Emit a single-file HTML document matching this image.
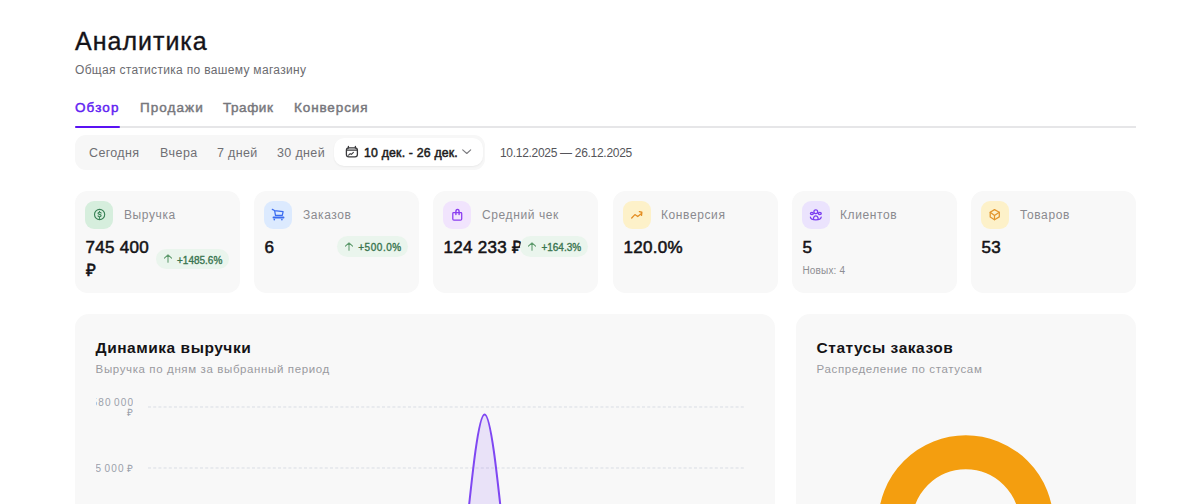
<!DOCTYPE html>
<html><head><meta charset="utf-8">
<style>
*{margin:0;padding:0;box-sizing:border-box}
html,body{width:1200px;height:504px;overflow:hidden;background:#fff;font-family:"Liberation Sans",sans-serif;color:#111}
.abs{position:absolute;white-space:nowrap}
#title{left:75px;top:26px;font-size:25px;line-height:30px;letter-spacing:1px;color:#151318;-webkit-text-stroke:0.35px #151318}
#sub{left:75px;top:62.5px;font-size:12px;line-height:14px;letter-spacing:0.32px;color:#6b6b70}
.tab{position:absolute;top:99.5px;font-size:13.5px;line-height:16px;color:#77777c;-webkit-text-stroke:0.45px currentColor;white-space:nowrap;letter-spacing:0.4px}
#tabline{position:absolute;left:75px;top:126px;width:1061px;height:2px;background:#e6e6e8}
#tabact{position:absolute;left:75px;top:125.6px;width:45px;height:2.4px;background:#5a12f3;border-radius:2px}
#bar{position:absolute;left:75px;top:135px;width:410px;height:35px;background:#f7f7f7;border-radius:11px}
.rb{position:absolute;top:146px;font-size:12.5px;line-height:14px;color:#6f6f74;white-space:nowrap;letter-spacing:0.35px}
#pill{position:absolute;left:334px;top:138px;width:149px;height:28px;background:#fff;border-radius:10px;box-shadow:0 1px 2px rgba(0,0,0,.06)}
#range{left:500px;top:146px;font-size:12px;line-height:14px;letter-spacing:-0.3px;color:#55555a}
.card{position:absolute;top:190.5px;width:165px;height:102.5px;background:#f8f8f8;border-radius:12.5px}
.ib{position:absolute;left:10px;top:10.5px;width:28px;height:28px;border-radius:9px}
.ib svg{position:absolute;left:0;top:0;width:28px;height:28px;fill:none;stroke-width:1.25;stroke-linecap:round;stroke-linejoin:round}
.lbl{position:absolute;left:49px;top:17.5px;font-size:12px;line-height:14px;color:#8a8a8f;white-space:nowrap;letter-spacing:0.6px}
.val{position:absolute;left:10.5px;top:45px;font-size:17px;line-height:23.7px;color:#141316;-webkit-text-stroke:0.55px currentColor;letter-spacing:0.3px}
.badge{position:absolute;height:20.7px;border-radius:11px;background:#eaf5ed;color:#3a7550;font-size:10px;line-height:20.7px;-webkit-text-stroke:0.35px currentColor;white-space:nowrap}
.badge svg{position:absolute;left:7.5px;top:5.8px;width:8px;height:9px}
.badge span{position:absolute;left:21px;top:2px}
.note{position:absolute;left:10.5px;top:74px;font-size:10px;color:#8e8e93;white-space:nowrap;letter-spacing:0.15px}
.big{position:absolute;top:314px;height:220px;background:#f8f8f8;border-radius:14px;overflow:hidden}
.bt{position:absolute;left:20.6px;top:23.5px;font-size:15.5px;line-height:20px;font-weight:bold;color:#141316;white-space:nowrap;letter-spacing:0.53px}
.bs{position:absolute;left:20.6px;top:48px;font-size:11.5px;line-height:14px;color:#9a9a9f;white-space:nowrap;letter-spacing:0.62px}
.yl{position:absolute;font-size:10px;line-height:10.5px;color:#9ba1ab;text-align:right;white-space:nowrap;letter-spacing:1.15px;word-spacing:-1.65px;margin-right:-1.15px}
</style></head><body>
<div class="abs" id="title">Аналитика</div>
<div class="abs" id="sub">Общая статистика по вашему магазину</div>

<div class="tab" style="left:75px;color:#5f22f2;letter-spacing:1.1px">Обзор</div>
<div class="tab" style="left:140px;letter-spacing:1.05px">Продажи</div>
<div class="tab" style="left:223px;letter-spacing:0.55px">Трафик</div>
<div class="tab" style="left:294px;letter-spacing:0.88px">Конверсия</div>
<div id="tabline"></div>
<div id="tabact"></div>

<div id="bar"></div>
<div class="rb" style="left:89px">Сегодня</div>
<div class="rb" style="left:160px;letter-spacing:0.5px">Вчера</div>
<div class="rb" style="left:217px">7 дней</div>
<div class="rb" style="left:277px">30 дней</div>
<div id="pill"></div>
<svg class="abs" style="left:340px;top:142px" width="24" height="20" viewBox="340 142 24 20" fill="none" stroke="#3a3a3d" stroke-width="1.3" stroke-linecap="round" stroke-linejoin="round">
  <rect x="346.4" y="147.9" width="11" height="9" rx="2.4"/><path d="M348.4 146.5v1.4M355.4 146.5v1.4M346.6 150.2h10.6"/><path d="M348.6 155.2l1.6-1.6 1.2.8 2-2" stroke-width="1.1"/>
</svg>
<div class="abs" style="left:364px;top:146px;font-size:12.3px;line-height:14px;-webkit-text-stroke:0.5px currentColor;color:#1d1c20;letter-spacing:0.19px">10 дек. - 26 дек.</div>
<svg class="abs" style="left:460px;top:146px" width="14" height="10" viewBox="460 146 14 10" fill="none" stroke="#7a7a7e" stroke-width="1.1" stroke-linecap="round" stroke-linejoin="round"><path d="M462.7 149.8l4.1 3.7 3.9-3.7"/></svg>
<div class="abs" id="range">10.12.2025 — 26.12.2025</div>

<div class="card" style="left:75px">
  <div class="ib" style="background:#d6eedd"><svg viewBox="0 0 28 28" style="stroke:#3a8257;stroke-width:1.15"><circle cx="14.6" cy="13.5" r="5.1"/><path d="M16.1 12.1c-.3-.6-.9-.9-1.6-.9-.8 0-1.5.4-1.5 1.1 0 1.4 3.1.8 3.1 2.3 0 .7-.7 1.1-1.5 1.1-.7 0-1.3-.3-1.6-.8M14.5 10.4v.8M14.5 16.5v.8"/></svg></div>
  <div class="lbl">Выручка</div>
  <div class="val">745 400<br>₽</div>
  <div class="badge" style="left:81px;top:58px;width:73.3px"><svg viewBox="0 0 8 9"><path d="M4 8.3V.8M.4 4.1L4 .8l3.6 3.3" fill="none" stroke="#5d9a6c" stroke-width="1.05" stroke-linecap="round" stroke-linejoin="round"/></svg><span>+1485.6%</span></div>
</div>
<div class="card" style="left:254px">
  <div class="ib" style="background:#dceafe"><svg viewBox="0 0 28 28" style="stroke:#3b6cf0"><path d="M8.3 8.4l2.2 1.1M10.6 9.6l8.5 1-.8 3.7h-6.8z"/><path d="M9.5 16.5h10" stroke-width="1.9"/><path d="M10.3 18.5v.2M17.9 18.5v.2" stroke-width="1.6"/></svg></div>
  <div class="lbl">Заказов</div>
  <div class="val">6</div>
  <div class="badge" style="left:83.2px;top:45.5px;width:70.7px"><svg viewBox="0 0 8 9"><path d="M4 8.3V.8M.4 4.1L4 .8l3.6 3.3" fill="none" stroke="#5d9a6c" stroke-width="1.05" stroke-linecap="round" stroke-linejoin="round"/></svg><span style="letter-spacing:0.55px">+500.0%</span></div>
</div>
<div class="card" style="left:433px">
  <div class="ib" style="background:#f1e4fd"><svg viewBox="0 0 28 28" style="stroke:#8a3cf0"><path d="M10.5 11.7h7.5c.4 0 .7.3.7.7v5.5c0 .7-.5 1.2-1.2 1.2H11c-.7 0-1.2-.5-1.2-1.2v-5.5c0-.4.3-.7.7-.7z"/><path d="M12.9 13.5v-2.8c0-1.3.7-2.3 1.6-2.3s1.6 1 1.6 2.3v2.8" stroke-width="1.4"/></svg></div>
  <div class="lbl">Средний чек</div>
  <div class="val">124 233 ₽</div>
  <div class="badge" style="left:87.4px;top:45.5px;width:67.3px"><svg viewBox="0 0 8 9"><path d="M4 8.3V.8M.4 4.1L4 .8l3.6 3.3" fill="none" stroke="#5d9a6c" stroke-width="1.05" stroke-linecap="round" stroke-linejoin="round"/></svg><span>+164.3%</span></div>
</div>
<div class="card" style="left:613px">
  <div class="ib" style="background:#fdf1c9"><svg viewBox="0 0 28 28" style="stroke:#e38c22"><path d="M8.7 17l3.2-3.4 2.8 1.9 3.8-3.1"/><path d="M16.4 10.6l2.4.6-.3 3.2" stroke-width="1.4"/></svg></div>
  <div class="lbl" style="left:48px">Конверсия</div>
  <div class="val">120.0%</div>
</div>
<div class="card" style="left:792px">
  <div class="ib" style="background:#ebe3fd"><svg viewBox="0 0 28 28" style="stroke:#7b3cf0"><circle cx="13.8" cy="10.8" r="1.9"/><ellipse cx="9.9" cy="12.4" rx="1.5" ry="1.1"/><ellipse cx="17.8" cy="12.4" rx="1.5" ry="1.1"/><path d="M11.4 17.9Q11.7 14.9 13.8 14.9T16.2 17.9"/><path d="M8.4 16.2Q8.9 18.9 13.8 18.9T19.2 16.2"/></svg></div>
  <div class="lbl" style="left:48px">Клиентов</div>
  <div class="val">5</div>
  <div class="note">Новых: 4</div>
</div>
<div class="card" style="left:971px">
  <div class="ib" style="background:#fdf1c9"><svg viewBox="0 0 28 28" style="stroke:#e2952c"><path d="M13.5 8.6l4.8 2.7v4.6l-4.8 2.8-4.3-2.8v-4.6z"/><path d="M9.2 11.3l4.3 3.2 4.8-3.2M13.5 14.5v4.2"/></svg></div>
  <div class="lbl">Товаров</div>
  <div class="val">53</div>
</div>

<div class="big" style="left:75px;width:700px">
  <div class="bt">Динамика выручки</div>
  <div class="bs">Выручка по дням за выбранный период</div>
  <div style="position:absolute;left:21px;top:80px;width:37px;height:130px;overflow:hidden">
    <div class="yl" style="right:0;top:3.5px">580 000<br>₽</div>
    <div class="yl" style="right:0;top:70px">435 000 ₽</div>
  </div>
</div>
<div class="big" style="left:796px;width:340px">
  <div class="bt">Статусы заказов</div>
  <div class="bs">Распределение по статусам</div>
</div>
<svg class="abs" style="left:0;top:0" width="1200" height="504">
  <g stroke="#d9dde4" stroke-width="1" stroke-dasharray="3 2.2">
    <line x1="148" y1="407" x2="746" y2="407"/>
    <line x1="148" y1="468" x2="746" y2="468"/>
  </g>
  <path d="M447.5 651C460 651 472.4 414.4 484.6 414.4S509.8 651 521.9 651z" fill="#8b5cf6" fill-opacity="0.14" stroke="none"/>
  <path d="M447.5 651C460 651 472.4 414.4 484.6 414.4S509.8 651 521.9 651" fill="none" stroke="#7f47f2" stroke-width="2"/>
  <circle cx="965.8" cy="522.9" r="70.6" fill="none" stroke="#f49e0f" stroke-width="34"/>
</svg>
</body></html>
